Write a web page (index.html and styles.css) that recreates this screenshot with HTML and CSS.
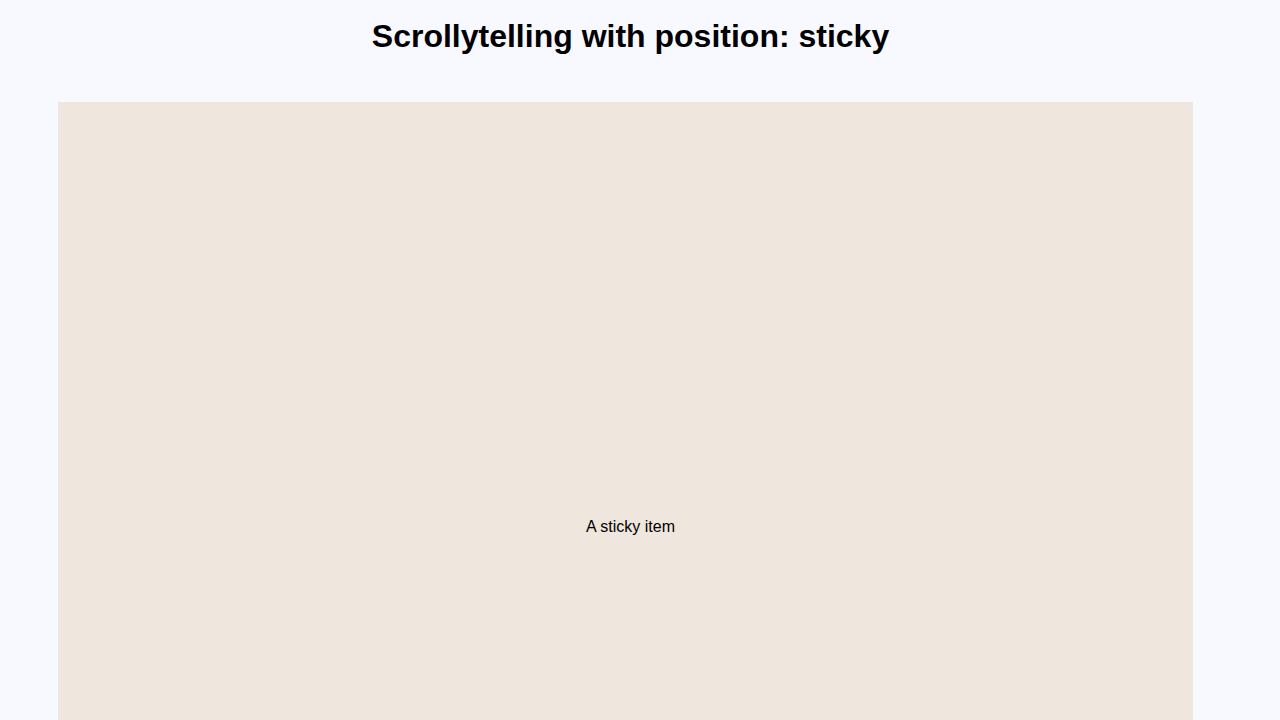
FILE: index.html
```html
<!DOCTYPE html>
<html lang="en">
<head>
    <meta charset="UTF-8">
    <meta name="viewport" content="width=device-width, initial-scale=1.0">
    <title>Scrollytelling with position: sticky</title>
    <link rel="stylesheet" href="styles.css">
</head>
<body>
    <h1>Scrollytelling with position: sticky</h1>
    <div class="scrolly">
        <div class="sticky">A sticky item</div>
    </div>
</body>
</html>
```

FILE: styles.css
```css
body {
    margin: 0;
    padding: 18px 27px 0 8px;
    background-color: ghostwhite;
    font-family: "Liberation Sans", Arial, sans-serif;
}
h1 {
    margin: 0 0 48px;
    font-size: 32px;
    line-height: 36px;
    text-align: center;
}
.scrolly {
    min-height: 100vh;
    margin: 0 60px 0 50px;
    background-color: #efe6dd;
}
/* stays in view while the section scrolls past */
.sticky {
    position: sticky;
    top: 0;
    padding: 416px 0 0 10px;
    font-size: 16px;
    line-height: 18px;
    text-align: center;
}
```
